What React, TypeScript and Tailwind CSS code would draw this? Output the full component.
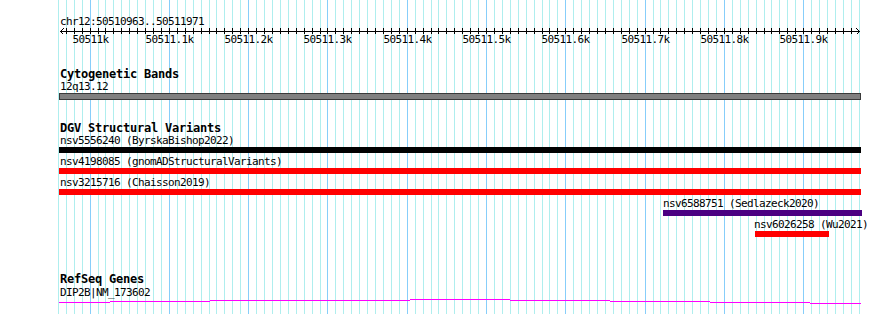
import React from 'react';

const START = 50510963;
const END = 50511971;
const toX = (b: number) => Math.round(60.3 + ((b - START) * 800) / (END - START + 1));

const gridBases: number[] = [];
for (let b = 50510960; b <= END; b += 10) gridBases.push(b);

const majors = [0, 1, 2, 3, 4, 5, 6, 7, 8, 9].map((i) => ({
  base: 50511000 + i * 100,
  label: i === 0 ? '50511k' : `50511.${i}k`,
}));

// gene model steps along the bottom track
const geneSteps: [number, number, number][] = [
  [59, 110, 302],
  [110, 210, 301],
  [210, 410, 300],
  [410, 510, 299],
  [510, 610, 300],
  [610, 710, 301],
  [710, 810, 302],
  [810, 861, 303],
];

const Label: React.FC<{ children: React.ReactNode; className?: string }> = ({ children, className = '' }) => (
  <div className={`h-[11px] text-[11px] leading-[11px] tracking-[-0.62px] whitespace-nowrap ${className}`}>{children}</div>
);

const Title: React.FC<{ children: React.ReactNode; className?: string }> = ({ children, className = '' }) => (
  <div className={`h-[12px] text-[12px] leading-[12px] font-bold tracking-[-0.22px] whitespace-nowrap ${className}`}>{children}</div>
);

export default function App() {
  return (
    <div className="relative w-[890px] h-[314px] bg-white overflow-hidden text-black font-['DejaVu_Sans_Mono','Liberation_Mono',monospace]">
      {/* grid behind all tracks */}
      <svg className="absolute inset-0" width={890} height={314}>
        {gridBases.map((b) => {
          const x = toX(b) + 0.5;
          const major = b % 100 === 0;
          return (
            <line key={b} x1={x} x2={x} y1={0} y2={314} stroke={major ? '#87cefa' : '#afeeee'} strokeWidth={1} />
          );
        })}
        {geneSteps.map(([x1, x2, y]) => (
          <line key={x1} x1={x1} x2={x2} y1={y + 0.5} y2={y + 0.5} stroke="#ff00ff" strokeWidth={1} />
        ))}
      </svg>

      <div className="relative pl-[60px] pt-[16px]">
        {/* ruler */}
        <Label>chr12:50510963..50511971</Label>
        <svg className="block -ml-[60px]" width={890} height={7}>
          <line x1={60} x2={860} y1={4.5} y2={4.5} stroke="#000" />
          <polyline points="64,1 60.5,4.5 64,8" fill="none" stroke="#000" />
          <polyline points="856,1 859.5,4.5 856,8" fill="none" stroke="#000" />
          {gridBases
            .filter((b) => b > START && b < END - 10)
            .map((b) => {
              const x = toX(b) + 0.5;
              return <line key={b} x1={x} x2={x} y1={1} y2={7} stroke="#000" />;
            })}
        </svg>
        <div className="relative h-[11px] -ml-[60px]">
          {majors.map((m) => (
            <span
              key={m.base}
              className="absolute top-0 -translate-x-1/2 text-[11px] leading-[11px] tracking-[-0.62px] whitespace-nowrap"
              style={{ left: toX(m.base) + 0.5 }}
            >
              {m.label}
            </span>
          ))}
        </div>

        {/* cytogenetic bands */}
        <Title className="mt-[23px]">Cytogenetic Bands</Title>
        <Label className="mt-[1px]">12q13.12</Label>
        <div className="mt-[1px] -ml-px w-[802px] h-[7px] bg-[#808080] border border-[#3a3a3a]" />

        {/* DGV */}
        <Title className="mt-[22px]">DGV Structural Variants</Title>
        <Label className="mt-[1px]">nsv5556240 (ByrskaBishop2022)</Label>
        <div className="mt-[1px] -ml-px w-[802px] h-[6px] bg-black" />
        <Label className="mt-[3px]">nsv4198085 (gnomADStructuralVariants)</Label>
        <div className="mt-[1px] -ml-px w-[802px] h-[6px] bg-[#ff0000]" />
        <Label className="mt-[3px]">nsv3215716 (Chaisson2019)</Label>
        <div className="mt-[1px] -ml-px w-[802px] h-[6px] bg-[#ff0000]" />
        <Label className="mt-[3px] ml-[603px]">nsv6588751 (Sedlazeck2020)</Label>
        <div className="mt-[1px] ml-[603px] w-[199px] h-[6px] bg-[#4b0082]" />
        <Label className="mt-[3px] ml-[694px]">nsv6026258 (Wu2021)</Label>
        <div className="mt-[1px] ml-[695px] w-[74px] h-[6px] bg-[#ff0000]" />

        {/* RefSeq */}
        <Title className="mt-[36px]">RefSeq Genes</Title>
        <Label className="mt-[2px]">DIP2B|NM_173602</Label>
      </div>
    </div>
  );
}
